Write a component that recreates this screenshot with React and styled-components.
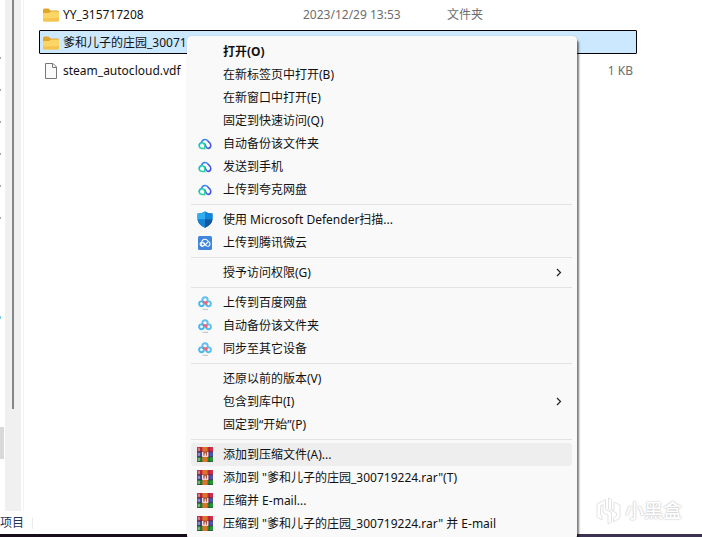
import React from "react";
import styled, { createGlobalStyle } from "styled-components";

const GlobalStyle = createGlobalStyle`
  * {
    box-sizing: border-box;
  }
  body {
    margin: 0;
    overflow: hidden;
    background: #fff;
    color: #111;
    font: 12px/16px "Noto Sans", "Noto Sans CJK SC", sans-serif;
  }
  button {
    font: inherit;
    color: inherit;
  }
`;

const Window = styled.div`
  position: relative;
  display: flex;
  flex-direction: column;
  height: 100vh;
  overflow: hidden;
`;

const Main = styled.div`
  display: flex;
  flex: 1;
  min-height: 0;
`;

const NavPane = styled.nav`
  width: 5px;
  display: flex;
  flex-direction: column;
  align-items: flex-start;
  padding-top: 57px;
  gap: 30px;
`;

const NavTick = styled.span`
  width: 1px;
  height: 2px;
  background: #a8a8a8;
`;

const NavMark = styled.span`
  width: 1px;
  height: 3px;
  margin-top: 67px;
  background: #7cc8ea;
`;

const NavThumb = styled.span`
  width: 4px;
  height: 32px;
  margin-top: 78px;
  background: #d9d9d9;
`;

const ScrollTrack = styled.div`
  width: 16px;
  padding: 0 7px 102px;
  background: #f0f0f0;
`;

const ScrollThumb = styled.div`
  width: 2px;
  height: 100%;
  background: #858585;
`;

const FileList = styled.main`
  flex: 1;
  margin-left: 2px;
  padding: 2px 65px 0 15px;
  border-left: 1px solid #f3f3f3;
`;

const FileTable = styled.table`
  display: block;
`;

const FileBody = styled.tbody`
  display: flex;
  flex-direction: column;
  gap: 4px;
`;

const FileRow = styled.tr`
  display: grid;
  grid-template-columns: 263px 144px 1fr 60px;
  align-items: center;
  height: 24px;
  padding: 1px 3px 0 0;
  border: 1px solid ${(props) => (props.$selected ? "#000" : "transparent")};
  border-radius: 1px;
  background: ${(props) => (props.$selected ? "#cce8ff" : "transparent")};
`;

const NameCell = styled.td`
  display: flex;
  align-items: center;
  gap: 4px;
  padding: 0 0 0 3px;
  white-space: nowrap;
`;

const Cell = styled.td`
  padding: 0;
  color: #6d6d6d;
  text-align: ${(props) => props.$align || "left"};
`;

const StatusBar = styled.footer`
  display: flex;
  align-items: center;
  height: 23px;
  color: #1f3555;
`;

const StatusText = styled.span`
  width: 24px;
  margin-right: 8px;
  white-space: nowrap;
`;

const StatusDivider = styled.span`
  width: 1px;
  height: 12px;
  background: #ececec;
`;

const Taskbar = styled.div`
  height: 3px;
  background: linear-gradient(to right, #170d1b 30%, #3b3350 80%);
`;

const Menu = styled.div`
  position: absolute;
  top: 36px;
  left: 187px;
  width: 390px;
  padding: 4px 5px 4px 4px;
  border-radius: 4px;
  background: #f9f9f9;
  box-shadow: 0 0 1px rgba(0, 0, 0, 0.3), 2px 4px 2px rgba(0, 0, 0, 0.5);
`;

const MenuItem = styled.button`
  display: flex;
  align-items: center;
  width: 100%;
  height: 23px;
  padding: 0 10px 0 6px;
  border: 0;
  border-radius: 3px;
  background: ${(props) => (props.$active ? "#eee" : "transparent")};
  font-weight: ${(props) => (props.$bold ? 700 : 400)};
  text-align: left;
  white-space: nowrap;
`;

const IconSlot = styled.span`
  display: flex;
  justify-content: center;
  width: 16px;
  margin-right: 10px;
`;

const Label = styled.span`
  flex: 1;
`;

const Separator = styled.hr`
  height: 1px;
  margin: 3px 0;
  border: 0;
  background: #e3e3e3;
`;

const Watermark = styled.div`
  position: absolute;
  right: 20px;
  bottom: 12px;
  display: flex;
  align-items: center;
  gap: 4px;
  color: #fff;
  font-size: 19px;
  font-weight: 500;
  line-height: 28px;
  text-shadow: 0 0 2px #bbb, 0 0 1px #ccc;
`;

const FolderIcon = () => (
  <svg width="16" height="14" viewBox="0 0 16 14">
    <path d="M0 2Q0 .5 1.5.5H5.5L7.5 2.5H14.5Q16 2.5 16 4V8H0Z" fill="#dfa52c" />
    <path d="M0 5.5Q0 5 1 5H6L8 3.5H15Q16 3.5 16 4.5V12Q16 13.5 14.5 13.5H1.5Q0 13.5 0 12Z" fill="#fbd566" />
    <path d="M0 10.5V12Q0 13.5 1.5 13.5H14.5Q16 13.5 16 12V10Z" fill="#f4c44e" />
  </svg>
);

const FileIcon = () => (
  <svg width="16" height="16" viewBox="0 0 16 16">
    <path d="M2.5.5H10L13.5 4V15.5H2.5Z" fill="#fafafa" stroke="#777" />
    <path d="M9.5.5V4.5H13.5" fill="none" stroke="#777" />
  </svg>
);

const QuarkIcon = () => (
  <svg width="14" height="14" viewBox="0 0 14 14" fill="none" strokeWidth="1.5" strokeLinecap="round">
    <path d="M3.6 5.2A3.6 3.6 0 0 1 10.4 4.6" stroke="#3c86ee" />
    <path d="M10.4 4.6Q12.8 6 12.8 8.6Q12.6 11.4 10 11.4Q8.6 11.2 7.8 9.2L6.6 6.6" stroke="#3f55e5" />
    <path d="M6.8 8.6A2.8 2.8 0 1 0 4 11.4H6.8V8.6Z" stroke="#26d3a1" />
    <path d="M3.6 5.4Q1.2 6.4 1.2 8.6" stroke="#27b5d8" />
  </svg>
);

const DefenderIcon = () => (
  <svg width="16" height="17" viewBox="0 0 16 17">
    <path d="M8 .5Q11 2.7 15.5 2.5V8Q15.2 13.5 8 16.8Q.8 13.5.5 8V2.5Q5 2.7 8 .5Z" fill="#0f6cbd" />
    <path d="M8 .5V8.5H.5V2.5Q5 2.7 8 .5Z" fill="#30aef0" />
    <path d="M8 .5Q11 2.7 15.5 2.5V8.5H8Z" fill="#1486da" />
    <path d="M.5 8.5H8V16.8Q1 13.5.5 8.5Z" fill="#1683d3" />
    <path d="M8 8.5H15.5Q15 13.5 8 16.8Z" fill="#115a9f" />
  </svg>
);

const WeiyunIcon = () => (
  <svg width="14" height="14" viewBox="0 0 14 14">
    <rect width="14" height="14" rx="1.5" fill="#3f86dc" />
    <g fill="none" stroke="#fff" strokeWidth="1.1" strokeLinecap="round">
      <path d="M5 10.3H4A2.2 2.2 0 0 1 3.7 6A3.4 3.4 0 0 1 10.2 5.5A2.5 2.5 0 0 1 10.2 10.3Q8.8 10.3 7.8 9.3L6 7.5" />
      <circle cx="4.8" cy="8.3" r="1.7" />
      <path d="M7 8.8L9.5 6.5" />
    </g>
  </svg>
);

const BaiduIcon = () => (
  <svg width="14" height="14" viewBox="0 0 14 14" fill="none" strokeWidth="1.9">
    <circle cx="7" cy="3.9" r="2.7" stroke="#62bdf0" />
    <circle cx="3.5" cy="7.8" r="2.4" stroke="#46b8ee" />
    <circle cx="10.5" cy="7.8" r="2.4" stroke="#55bff0" />
    <path d="M4.8 5.8Q7 5.6 9 8.8M9.2 5.8L6.6 7.6" stroke="#ec6678" />
    <path d="M4.5 13.3H10" stroke="#bdbdc5" strokeWidth="1" />
  </svg>
);

const RarIcon = () => (
  <svg width="16" height="15" viewBox="0 0 16 15">
    <rect width="16" height="5" fill="#cf2f48" />
    <rect y="5" width="16" height="5" fill="#4d56ad" />
    <rect y="10" width="16" height="5" fill="#2a9436" />
    <path d="M0 4.8H16M0 9.8H16M0 14.8H16" stroke="#302336" strokeWidth=".6" />
    <path d="M2 1.2V3.8M2 6.2V8.8M2 11.2V13.8" stroke="#ece2d8" strokeWidth=".9" />
    <path d="M4 0V15M12.2 0V15" stroke="#302336" strokeWidth=".5" />
    <rect x="5.5" width="5" height="15" fill="#dd7328" />
    <rect x="5" y="4.5" width="6.5" height="5.5" fill="#b05040" />
    <path d="M5.7 5V9.2H10.7V5M8.2 6.2V9" fill="none" stroke="#fff" strokeWidth="1.1" />
  </svg>
);

const Chevron = () => (
  <svg width="6" height="10" viewBox="0 0 6 10">
    <path d="M1 1L4.5 4.5L1 8" fill="none" stroke="#222" strokeWidth="1.2" />
  </svg>
);

const BoxLogo = () => (
  <svg width="25" height="28" viewBox="0 0 25 28" fill="#fff" stroke="#e3e3e3">
    <path d="M9.5 2.5L1 7V20L6 23V19L4.5 18V9L7 7.5V15.5L12 18V27L15.5 25V15.5L9.5 12.5Z" />
    <path d="M12.5 1L15.5 2.5V12L18 13.5V5L24 8V21L17.5 25V21L20.5 19V16L12.5 12Z" />
  </svg>
);

const files = [
  { name: "YY_315717208", date: "2023/12/29 13:53", type: "文件夹", icon: FolderIcon },
  { name: "爹和儿子的庄园_300719224", icon: FolderIcon, selected: true },
  { name: "steam_autocloud.vdf", size: "1 KB", icon: FileIcon },
];

const groups = [
  [
    { label: "打开(O)", bold: true },
    { label: "在新标签页中打开(B)" },
    { label: "在新窗口中打开(E)" },
    { label: "固定到快速访问(Q)" },
    { label: "自动备份该文件夹", icon: QuarkIcon },
    { label: "发送到手机", icon: QuarkIcon },
    { label: "上传到夸克网盘", icon: QuarkIcon },
  ],
  [
    { label: "使用 Microsoft Defender扫描...", icon: DefenderIcon },
    { label: "上传到腾讯微云", icon: WeiyunIcon },
  ],
  [{ label: "授予访问权限(G)", submenu: true }],
  [
    { label: "上传到百度网盘", icon: BaiduIcon },
    { label: "自动备份该文件夹", icon: BaiduIcon },
    { label: "同步至其它设备", icon: BaiduIcon },
  ],
  [
    { label: "还原以前的版本(V)" },
    { label: "包含到库中(I)", submenu: true },
    { label: "固定到“开始”(P)" },
  ],
  [
    { label: "添加到压缩文件(A)...", icon: RarIcon, active: true },
    { label: '添加到 "爹和儿子的庄园_300719224.rar"(T)', icon: RarIcon },
    { label: "压缩并 E-mail...", icon: RarIcon },
    { label: '压缩到 "爹和儿子的庄园_300719224.rar" 并 E-mail', icon: RarIcon },
  ],
];

const ContextMenu = () => (
  <Menu role="menu">
    {groups.map((items, index) => (
      <React.Fragment key={index}>
        {index > 0 && <Separator />}
        {items.map(({ label, icon: Icon, bold, active, submenu }) => (
          <MenuItem key={label} type="button" role="menuitem" $bold={bold} $active={active}>
            <IconSlot>{Icon && <Icon />}</IconSlot>
            <Label>{label}</Label>
            {submenu && <Chevron />}
          </MenuItem>
        ))}
      </React.Fragment>
    ))}
  </Menu>
);

const App = () => (
  <>
    <GlobalStyle />
    <Window>
      <Main>
        <NavPane>
          {[0, 1, 2, 3, 4, 5].map((tick) => (
            <NavTick key={tick} />
          ))}
          <NavMark />
          <NavThumb />
        </NavPane>
        <ScrollTrack>
          <ScrollThumb />
        </ScrollTrack>
        <FileList>
          <FileTable>
            <FileBody>
              {files.map(({ name, date, type, size, icon: Icon, selected }) => (
                <FileRow key={name} $selected={selected}>
                  <NameCell>
                    <Icon />
                    {name}
                  </NameCell>
                  <Cell>{date}</Cell>
                  <Cell>{type}</Cell>
                  <Cell $align="right">{size}</Cell>
                </FileRow>
              ))}
            </FileBody>
          </FileTable>
        </FileList>
      </Main>
      <StatusBar>
        <StatusText>项目</StatusText>
        <StatusDivider />
      </StatusBar>
      <Taskbar />
      <Watermark>
        <BoxLogo />
        小黑盒
      </Watermark>
      <ContextMenu />
    </Window>
  </>
);

export default App;
